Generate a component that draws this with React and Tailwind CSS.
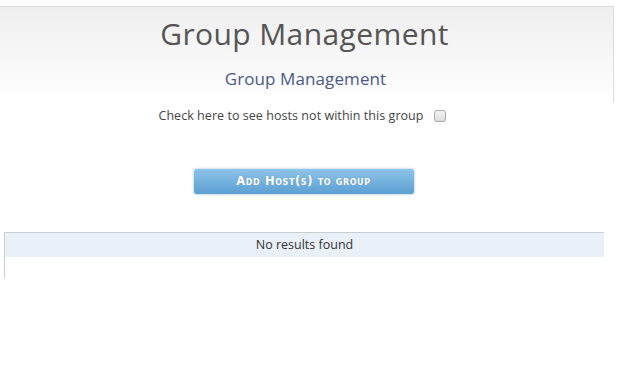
import React from "react";

export default function App() {
  return (
    <div className="w-[620px] h-[392px] bg-white font-['Open_Sans',sans-serif] overflow-hidden">
      <div className="pt-[6px]">
        <div className="w-[614px] h-[96px] border-t border-r border-[#dcdcdc] bg-gradient-to-b from-[#efefef] to-white flex flex-col items-center">
          <h1 className="mt-[10px] mr-[4px] text-[30px] leading-[34px] text-[#555555] tracking-[0.4px]">Group Management</h1>
          <h2 className="mt-[17px] mr-[2px] text-[17px] leading-[22px] text-[#4a5a86] tracking-[0.1px]">Group Management</h2>
        </div>
      </div>
      <div className="flex items-center justify-center mt-[5px] mr-[16px] gap-[10px]">
        <span className="text-[12.5px] leading-[18px] text-[#444444] tracking-[0.05px]">Check here to see hosts not within this group</span>
        <span className="w-[12px] h-[12px] rounded-[3px] border border-[#a8a8a8] bg-gradient-to-b from-[#f4f4f4] to-[#dedede]"></span>
      </div>
      <div className="flex justify-center mt-[43px] mr-[13px]">
        <div className="w-[222px] h-[27px] rounded-[4px] p-[1px] bg-[#dbe8f1] shadow-[0_0_2px_rgba(0,0,0,0.15)]">
          <div className="w-full h-full rounded-[3px] bg-gradient-to-b from-[#8ec4e8] to-[#5b9fd3] flex items-center justify-center">
            <span className="text-white font-bold text-[11.5px] [font-variant:small-caps] tracking-[0.6px] font-['DejaVu_Sans',sans-serif] [text-shadow:0_0_1px_rgba(0,0,0,0.2)]">Add Host(s) to group</span>
          </div>
        </div>
      </div>
      <div className="mt-[37px] ml-[4px] w-[600px] h-[46px] border-l border-[#c9ced3]">
        <div className="h-[25px] border-t border-[#c9ced3] bg-[#e9f0f8] flex items-center justify-center">
          <span className="text-[12.5px] text-[#333333]">No results found</span>
        </div>
      </div>
    </div>
  );
}
